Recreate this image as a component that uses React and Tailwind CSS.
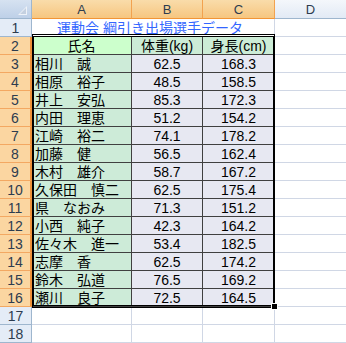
import clsx from "clsx";

const people = [
  ["相川　誠", "62.5", "168.3"],
  ["相原　裕子", "48.5", "158.5"],
  ["井上　安弘", "85.3", "172.3"],
  ["内田　理恵", "51.2", "154.2"],
  ["江崎　裕二", "74.1", "178.2"],
  ["加藤　健", "56.5", "162.4"],
  ["木村　雄介", "58.7", "167.2"],
  ["久保田　慎二", "62.5", "175.4"],
  ["県　なおみ", "71.3", "151.2"],
  ["小西　純子", "42.3", "164.2"],
  ["佐々木　進一", "53.4", "182.5"],
  ["志摩　香", "62.5", "174.2"],
  ["鈴木　弘道", "76.5", "169.2"],
  ["瀬川　良子", "72.5", "164.5"],
];

const rowGrid = "grid grid-cols-[32px_100px_71px_72px_71px] h-[18px]";

function RowHead({ n, active }) {
  return (
    <div
      className={clsx(
        "flex items-center justify-center border-b text-[14px] leading-none text-[#2d3c4f]",
        active
          ? "bg-[#fbd6a1] border-b-[#f3a862] border-r-2 border-r-[#ee9138]"
          : "bg-[#e4ecf7] border-b-[#9eb6ce] border-r border-r-[#9eb6ce]"
      )}
    >
      {n}
    </div>
  );
}

function Blank({ last }) {
  return (
    <div
      className={clsx(
        "bg-white border-b border-b-[#d0d7e5]",
        !last && "border-r border-r-[#d0d7e5]"
      )}
    />
  );
}

export default function App() {
  return (
    <div className="relative w-[346px] h-[343px] overflow-hidden bg-white font-['Liberation_Sans','Noto_Sans_CJK_JP',sans-serif] text-black">
      {/* Column headers */}
      <div className="grid grid-cols-[32px_100px_71px_72px_71px] h-[19px]">
        <div className="relative bg-gradient-to-b from-[#d6e2f1] to-[#bed0e8] border-r border-b border-[#9eb6ce]">
          <svg className="absolute right-[4px] bottom-[3px]" width="9" height="9" viewBox="0 0 9 9">
            <polygon points="9,0 9,9 0,9" fill="#eef2f8" />
            <polygon points="8,2 8,8 2,8" fill="#c4d0e0" />
          </svg>
        </div>
        {["A", "B", "C"].map((c) => (
          <div
            key={c}
            className="flex items-center justify-center bg-gradient-to-b from-[#f9dcaa] to-[#f6c680] border-r border-r-[#f2a24f] border-b border-b-[#f29536] text-[13px] leading-none text-[#2d3c4f]"
          >
            {c}
          </div>
        ))}
        <div className="flex items-center justify-center bg-gradient-to-b from-[#f4f7fb] to-[#e2eaf5] border-b border-b-[#9eb6ce] text-[13px] leading-none text-[#2d3c4f]">
          D
        </div>
      </div>

      {/* Row 1: title */}
      <div className={rowGrid}>
        <RowHead n={1} />
        <div className="col-span-3 flex items-center justify-center border-r border-r-[#d0d7e5] text-[14px] leading-none text-[#3366ff] whitespace-nowrap pr-[6px]">
          運動会 綱引き出場選手データ
        </div>
        <Blank last />
      </div>

      {/* Row 2: table header */}
      <div className={rowGrid}>
        <RowHead n={2} active />
        <div className="flex items-center justify-center bg-[#ccffcc] border-r border-b border-[#404040] text-[14px] leading-none">
          氏名
        </div>
        <div className="flex items-center justify-center bg-[#ccecd6] border-r border-b border-[#404040] text-[14px] leading-none whitespace-nowrap">
          体重(kg)
        </div>
        <div className="flex items-center justify-center bg-[#ccecd6] border-r border-b border-[#404040] text-[14px] leading-none whitespace-nowrap">
          身長(cm)
        </div>
        <Blank last />
      </div>

      {/* Rows 3-16: data */}
      {people.map(([name, weight, height], i) => (
        <div key={name} className={rowGrid}>
          <RowHead n={i + 3} active />
          <div className="flex items-center pl-[3px] bg-[#cdebd8] border-r border-b border-[#404040] text-[14px] leading-none whitespace-nowrap">
            {name}
          </div>
          <div className="flex items-center justify-center bg-[#e7e8f2] border-r border-b border-[#404040] text-[14px] leading-none">
            {weight}
          </div>
          <div className="flex items-center justify-center bg-[#e7e8f2] border-r border-b border-[#404040] text-[14px] leading-none">
            {height}
          </div>
          <Blank last />
        </div>
      ))}

      {/* Rows 17-18: empty */}
      {[17, 18].map((n) => (
        <div key={n} className={rowGrid}>
          <RowHead n={n} />
          <Blank />
          <Blank />
          <Blank />
          <Blank last />
        </div>
      ))}

      {/* Selection outline + fill handle */}
      <div className="pointer-events-none absolute left-[32px] top-[34px] w-[243px] h-[274px] border-y-[3px] border-x-2 border-black [border-style:double_solid]" />
      <div className="pointer-events-none absolute left-[271px] top-[303px] w-[7px] h-[7px] bg-black border border-white" />
    </div>
  );
}
